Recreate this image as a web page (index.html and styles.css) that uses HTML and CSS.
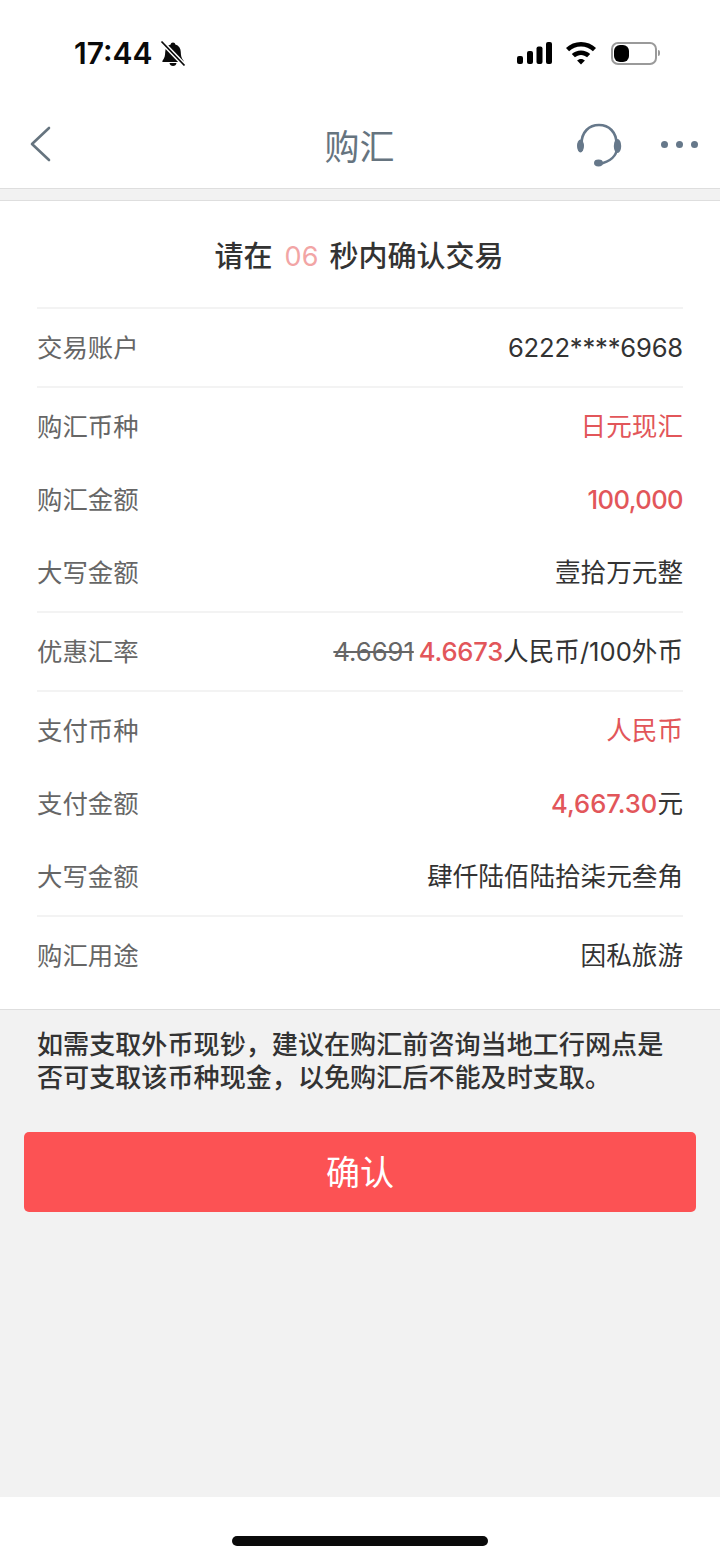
FILE: index.html
```html
<!DOCTYPE html>
<html lang="zh-CN">
<head>
<meta charset="utf-8">
<title>购汇</title>
<link rel="stylesheet" href="styles.css">
</head>
<body>
<div class="screen">
  <header class="head">
    <div class="status">
      <div class="status-left">
        <span class="time">17:44</span>
        <svg class="bell" width="26" height="28" viewBox="0 0 26 28"><path d="M13 2.500c1.300 0 2.200.9 2.300 2 3.600 1 5.500 4 5.500 7.800 0 3.200.6 6 2.700 8.400.5.6.1 1.300-.6 1.300H3.100c-.7 0-1.100-.7-.6-1.300 2.100-2.400 2.700-5.200 2.700-8.400 0-3.800 1.900-6.800 5.500-7.800.1-1.100 1-2 2.300-2z" fill="#0a0a0a"/><path d="M9.500 23h7c-.2 1.900-1.600 3-3.500 3s-3.300-1.100-3.500-3z" fill="#0a0a0a"/><path d="M1.500 1.500l23 24" stroke="#fff" stroke-width="4.500"/><path d="M1.500 1.500l23 24" stroke="#0a0a0a" stroke-width="1.800"/></svg>
      </div>
      <div class="status-right">
        <svg width="35" height="24" viewBox="0 0 35 24"><rect x="0" y="15" width="6" height="8" rx="2" fill="#000"/><rect x="10" y="10" width="6" height="13" rx="2" fill="#000"/><rect x="19.500" y="5.500" width="6" height="17.500" rx="2" fill="#000"/><rect x="29" y="1" width="6" height="22" rx="2" fill="#000"/></svg>
        <svg class="wifi" width="32" height="24" viewBox="0 0 32 24"><path d="M16 1c5.800 0 11 2.200 15 6l-3.100 3.200C24.700 7.200 20.600 5.500 16 5.500S7.300 7.200 4.100 10.200L1 7C5 3.200 10.200 1 16 1z" fill="#000"/><path d="M16 9.500c3.500 0 6.700 1.300 9.200 3.600l-3.100 3.200c-1.600-1.500-3.800-2.400-6.100-2.400s-4.500.9-6.100 2.400l-3.100-3.200C9.300 10.800 12.500 9.500 16 9.500z" fill="#000"/><path d="M16 18c1.500 0 2.900.6 3.900 1.500L16 23.500l-3.900-4C13.100 18.600 14.500 18 16 18z" fill="#000"/></svg>
        <div class="battery"><span class="battery-level"></span></div>
        <span class="battery-cap"></span>
      </div>
    </div>
    <nav class="nav">
      <svg class="back" width="22" height="36" viewBox="0 0 22 36"><path d="M20 2L3 18l17 16" fill="none" stroke="#66747f" stroke-width="2.600" stroke-linecap="round" stroke-linejoin="round"/></svg>
      <h1 class="nav-title">购汇</h1>
      <div class="nav-actions">
        <svg class="headset" width="46" height="44" viewBox="0 0 46 44"><path d="M5.500 21C5.500 9 13 2 23 2s17.500 7 17.500 19" fill="none" stroke="#66788a" stroke-width="2.600"/><path d="M41 24c0 9-7 15-18 17" fill="none" stroke="#66788a" stroke-width="2.600"/><ellipse cx="4.500" cy="23" rx="3.500" ry="6.500" fill="#66788a"/><ellipse cx="41.500" cy="23" rx="3.700" ry="7" fill="#66788a"/><ellipse cx="22.500" cy="40" rx="4.500" ry="3.400" fill="#66788a"/></svg>
        <div class="dots"><span></span><span></span><span></span></div>
      </div>
    </nav>
  </header>

  <main class="main">
    <section class="card">
      <h2 class="countdown">请在<span class="seconds">06</span>秒内确认交易</h2>
      <div class="group">
        <div class="row"><span class="label">交易账户</span><span class="value tight">6222****6968</span></div>
      </div>
      <div class="group multi">
        <div class="row"><span class="label">购汇币种</span><span class="value red">日元现汇</span></div>
        <div class="row"><span class="label">购汇金额</span><span class="value red strong narrow">100,000</span></div>
        <div class="row"><span class="label">大写金额</span><span class="value">壹拾万元整</span></div>
      </div>
      <div class="group">
        <div class="row"><span class="label">优惠汇率</span><span class="value"><s class="old">4.6691</s><span class="red strong tight">4.6673</span>人民币/100外币</span></div>
      </div>
      <div class="group multi">
        <div class="row"><span class="label">支付币种</span><span class="value red">人民币</span></div>
        <div class="row"><span class="label">支付金额</span><span class="value"><span class="red strong">4,667.30</span>元</span></div>
        <div class="row"><span class="label">大写金额</span><span class="value">肆仟陆佰陆拾柒元叁角</span></div>
      </div>
      <div class="group last">
        <div class="row"><span class="label">购汇用途</span><span class="value">因私旅游</span></div>
      </div>
    </section>
    <p class="note">如需支取外币现钞，建议在购汇前咨询当地工行网点是否可支取该币种现金，以免购汇后不能及时支取。</p>
    <button class="confirm">确认</button>
  </main>

  <footer class="home"><span class="home-bar"></span></footer>
</div>
</body>
</html>
```
FILE: styles.css
```css
* { box-sizing: border-box; margin: 0; padding: 0; }
html, body { width: 720px; height: 1560px; overflow: hidden; }
body {
  font-family: "Inter", "Noto Sans CJK SC", sans-serif;
  background: #f2f2f2;
  color: #333;
}
.screen { height: 1560px; display: flex; flex-direction: column; }

.head { height: 189px; background: #fff; border-bottom: 1px solid #dedede; flex: none; }
.status { height: 100px; padding: 38px 60px 0 74px; display: flex; justify-content: space-between; align-items: flex-start; }
.status-left { display: flex; align-items: center; gap: 7px; height: 30px; }
.time { font-size: 30px; font-weight: 600; color: #0a0a0a; line-height: 30px; }
.bell { margin-top: 2px; }
.status-right { display: flex; align-items: center; height: 30px; }
.wifi { margin-left: 13px; }
.battery { width: 46px; height: 23px; margin-left: 14px; border: 2px solid #9a9a9a; border-radius: 7px; padding: 1px; background: #fff; }
.battery-level { display: block; width: 15px; height: 17px; background: #000; border-radius: 6px; }
.battery-cap { width: 2px; height: 6px; margin-left: 1px; background: #9a9a9a; border-radius: 0 2px 2px 0; }

.nav { height: 88px; position: relative; display: flex; align-items: center; justify-content: space-between; padding: 0 22px 0 29px; }
.nav-title { position: absolute; left: 0; right: 0; top: 0; bottom: 0; padding-right: 1px; display: flex; align-items: center; justify-content: center; font-size: 35px; font-weight: 400; color: #66747f; }
.nav-actions { display: flex; align-items: center; gap: 39px; }
.headset { margin-top: 2px; }
.dots { display: flex; gap: 8px; margin-top: 1px; }
.dots span { width: 7px; height: 7px; border-radius: 50%; background: #66788a; }

.main { flex: 1; padding-top: 11px; display: flex; flex-direction: column; }
.card { background: #fff; border-top: 1px solid #dedede; border-bottom: 1px solid #dedede; padding: 0 37px; }
.countdown { height: 106px; padding: 5px 2px 0 0; display: flex; align-items: center; justify-content: center; font-size: 29px; line-height: 36px; font-weight: 500; color: #333; }
.seconds { color: #f2a5a5; font-weight: 400; font-size: 27px; margin: 0 11px 0 12px; }
.group { border-top: 2px solid #f3f3f3; }
.group.multi { padding: 2px 0; }
.group .row { height: 77px; }
.group.multi .row { height: 73px; }
.group.last { padding-bottom: 15px; }
.row { display: flex; align-items: center; justify-content: space-between; font-size: 25.600px; line-height: 32px; }
.label { color: #666; font-size: 25.400px; }
.value { color: #333; white-space: nowrap; }
.red { color: #e2565a; }
.strong { font-weight: 500; }
.tight { letter-spacing: -0.2px; }
.narrow { letter-spacing: -0.6px; }
.old { color: #666; margin-right: 5px; }

.note { padding: 18px 37px 0; font-size: 26.100px; line-height: 33px; font-weight: 500; color: #333; }
.confirm {
  margin: 38px 24px 0;
  height: 80px;
  padding-bottom: 3px;
  border: 0;
  border-radius: 5px;
  background: #fc5254;
  color: #fff;
  font: 400 34px "Noto Sans CJK SC", sans-serif;
}

.home { height: 63px; background: #fff; flex: none; display: flex; justify-content: center; padding-top: 39px; }
.home-bar { width: 256px; height: 10px; border-radius: 5px; background: #0a0a0a; }
```
